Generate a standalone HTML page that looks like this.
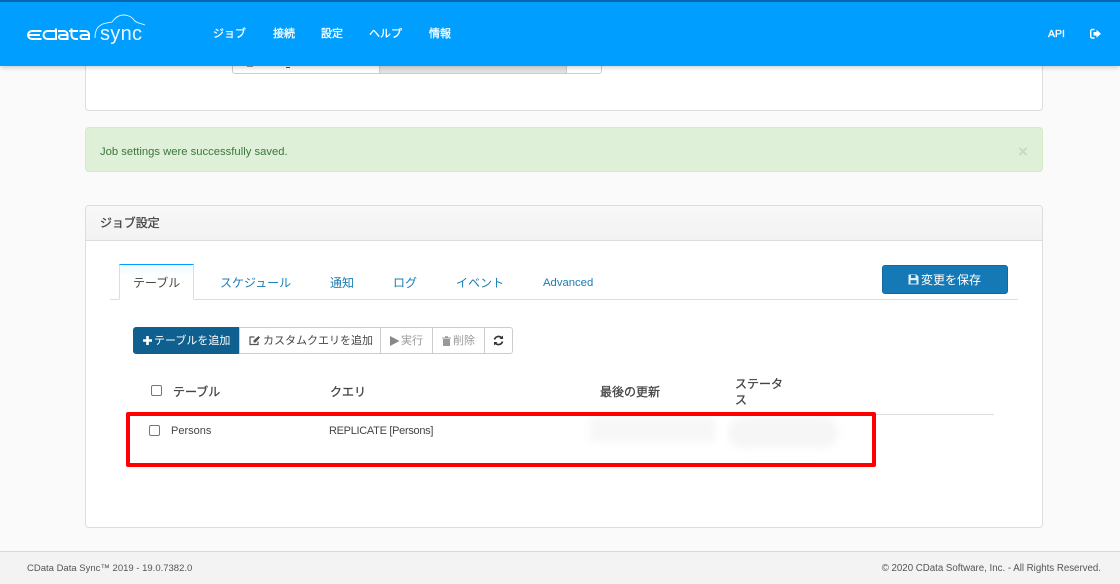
<!DOCTYPE html>
<html lang="ja"><head><meta charset="utf-8"><title>CData Sync</title>
<style>
html,body{margin:0;padding:0}
body{width:1120px;height:584px;position:relative;overflow:hidden;background:#fafafa;font-family:"Liberation Sans","Noto Sans CJK JP",sans-serif;font-size:12px;color:#444}
.a{position:absolute;white-space:nowrap}
.box{position:absolute;box-sizing:border-box}
.nav{position:absolute;top:26px;color:#fff;font-size:11px;line-height:16px;-webkit-text-stroke:.3px #fff;white-space:nowrap}
.tab{position:absolute;top:275px;line-height:16px;font-size:12px;color:#1a7db5;white-space:nowrap}
.btn{position:absolute;top:327px;height:27px;box-sizing:border-box;border:1px solid #ccc;background:#fff;font-size:11px;line-height:27px;white-space:nowrap;text-align:center;color:#444}
.cb{position:absolute;width:11px;height:11px;box-sizing:border-box;border:1px solid #767676;border-radius:2px;background:#fff}
.th{position:absolute;font-size:12px;-webkit-text-stroke:.3px #444;color:#444;line-height:16px;white-space:nowrap}
</style></head><body>

<!-- top panel fragment -->
<div class="box" style="left:85px;top:50px;width:958px;height:61px;background:#fff;border:1px solid #ddd;border-radius:4px"></div>
<div class="box" style="left:232px;top:50px;width:370px;height:24px;background:#fff;border:1px solid #ccc;border-radius:3px"></div>
<div class="box" style="left:379px;top:50px;width:188px;height:24px;background:#e2e2e2;border:1px solid #ccc;border-width:0 1px 1px 1px"></div>
<div class="box" style="left:247px;top:66px;width:6px;height:1px;background:#999"></div>
<div class="box" style="left:286px;top:67px;width:4px;height:1px;background:#555"></div>

<!-- header -->
<div class="box" style="left:0;top:0;width:1120px;height:66px;background:#009fff;border-top:2px solid #0a66b0;box-shadow:0 1px 5px rgba(0,0,0,.22)"></div>
<svg class="box" style="left:0;top:0" width="160" height="60" viewBox="0 0 160 60" fill="none" stroke="#fff">
 <path d="M41.500 31H32a4 4 0 0 0 0 8H41.500M29 35H40" stroke-width="2"/>
 <path d="M56 28.500V39H47.500a4 4 0 0 1 0-8H56" stroke-width="2"/>
 <path d="M58 31H64a3.500 3.500 0 0 1 3.500 3.500V39H61a2 2 0 0 1 0-4H67.500" stroke-width="2"/>
 <path d="M71.500 28.500V35a4 4 0 0 0 4 4H78M69 31H78" stroke-width="2"/>
 <path d="M79.500 31H85.500a3.500 3.500 0 0 1 3.500 3.500V39H82.500a2 2 0 0 1 0-4H89" stroke-width="2"/>
 <path d="M95 38C95 32 97 27 101 25C104 23 108 23 112 22C115 18 119 15 123 15C128 15 132 17 134 20C136 23 140 23 145 25" stroke-width=".9" opacity=".9"/>
 <text x="100" y="40" font-family="Liberation Sans,sans-serif" font-size="20" fill="#fff" stroke="none" opacity=".92" textLength="42">sync</text>
</svg>
<div class="nav" style="left:213px">ジョブ</div>
<div class="nav" style="left:273px">接続</div>
<div class="nav" style="left:321px">設定</div>
<div class="nav" style="left:369px">ヘルプ</div>
<div class="nav" style="left:429px">情報</div>
<div class="nav" style="left:1048px;font-size:10.500px">API</div>
<svg class="box" style="left:1090px;top:28px" width="12" height="12" viewBox="0 0 12 12"><path d="M4.500 1.500H2.200A1.500 1.500 0 0 0 .7 3v5.500A1.500 1.500 0 0 0 2.200 10h2.300" fill="none" stroke="#fff" stroke-width="1.400"/><path d="M3.500 4H6.500V1.800L11 5.800 6.500 9.700V7.500H3.500z" fill="#fff"/></svg>

<!-- alert -->
<div class="box" style="left:85px;top:127px;width:958px;height:45px;background:#dff0d8;border:1px solid #d6e9c6;border-radius:4px"></div>
<div class="a" style="left:100px;top:145px;font-size:11.250px;line-height:15px;color:#3c763d">Job settings were successfully saved.</div>
<div class="a" style="left:1018px;top:143px;font-size:17px;line-height:18px;font-weight:bold;color:#c9dac3">×</div>

<!-- main panel -->
<div class="box" style="left:85px;top:205px;width:958px;height:323px;background:#fff;border:1px solid #ddd;border-radius:4px"></div>
<div class="box" style="left:86px;top:206px;width:956px;height:35px;background:linear-gradient(#f8f8f8,#f2f2f2);border-bottom:1px solid #ddd;border-radius:3px 3px 0 0"></div>
<div class="a" style="left:100px;top:215px;font-size:12px;letter-spacing:-.1px;line-height:17px;color:#444;-webkit-text-stroke:.3px #444">ジョブ設定</div>

<!-- tabs -->
<div class="box" style="left:110px;top:299px;width:908px;height:1px;background:#ddd"></div>
<div class="box" style="left:119px;top:264px;width:75px;height:36px;background:linear-gradient(#eef9ff 0,#fff 12px);border:1px solid #ddd;border-top:1px solid #009fff;border-bottom:1px solid #fff"></div>
<div class="tab" style="left:133px;color:#444">テーブル</div>
<div class="tab" style="left:220px">スケジュール</div>
<div class="tab" style="left:330px">通知</div>
<div class="tab" style="left:393px">ログ</div>
<div class="tab" style="left:456px">イベント</div>
<div class="tab" style="left:543px;font-size:11.300px">Advanced</div>

<!-- save -->
<div class="box" style="left:882px;top:265px;width:126px;height:29px;background:#1479b5;border:1px solid #1169a0;border-radius:3px"></div>
<svg class="box" style="left:908px;top:274px" width="11" height="11" viewBox="0 0 11 11"><path d="M1 .5H8.500L10.500 2.500V10.500H.5V1z" fill="#dff0fa"/><rect x="3" y="1" width="4.500" height="3" fill="#1479b5"/><rect x="2.500" y="6.200" width="6" height="3.400" fill="#1479b5"/></svg>
<div class="a" style="left:921px;top:272px;font-size:12px;line-height:16px;color:#fff">変更を保存</div>

<!-- toolbar -->
<div class="btn" style="left:133px;width:107px;background:#0f5f8f;border-color:#0f5f8f;border-radius:3px 0 0 3px;color:#fff;text-align:left"><svg style="position:absolute;left:9px;top:8px" width="9" height="9" viewBox="0 0 9 9"><path d="M3.200 0H5.800V3.200H9V5.800H5.800V9H3.200V5.800H0V3.200H3.200z" fill="#fff"/></svg><span style="position:absolute;left:20px;top:0">テーブルを追加</span></div>
<div class="btn" style="left:239px;width:142px;text-align:left;padding-left:23px"><svg style="position:absolute;left:9px;top:7px" width="12" height="11" viewBox="0 0 12 11" fill="none" stroke="#555" stroke-width="1.200"><path d="M9 6.500V9.500H1V2H5.500"/><path d="M4.500 7.500V5.500L9.500 1 11 2.500 6.500 7.500z" fill="#555" stroke="none"/></svg>カスタムクエリを追加</div>
<div class="btn" style="left:380px;width:53px;color:#999;text-align:left;padding-left:20px"><svg style="position:absolute;left:9px;top:8px" width="10" height="10" viewBox="0 0 10 10"><path d="M0 0L9.500 5 0 10z" fill="#888"/></svg>実行</div>
<div class="btn" style="left:432px;width:53px;color:#999;text-align:left;padding-left:20px"><svg style="position:absolute;left:9px;top:8px" width="9" height="10" viewBox="0 0 9 10"><path d="M0 1.500H9V2.500H0zM3 .2H6V1.500H3zM1 3H8V10H1z" fill="#999"/></svg>削除</div>
<div class="btn" style="left:484px;width:29px;border-radius:0 3px 3px 0"><svg style="position:absolute;left:8px;top:7px" width="11" height="11" viewBox="0 0 11 11" fill="none" stroke="#333" stroke-width="1.700"><path d="M1.500 4.500A4.200 4.200 0 0 1 8.800 3"/><path d="M9.500 6.500A4.200 4.200 0 0 1 2.200 8"/><path d="M10 .5V4H6.500z" fill="#333" stroke="none"/><path d="M1 10.500V7H4.500z" fill="#333" stroke="none"/></svg></div>

<!-- table -->
<div class="cb" style="left:151px;top:385px"></div>
<div class="th" style="left:173px;top:384px">テーブル</div>
<div class="th" style="left:330px;top:384px">クエリ</div>
<div class="th" style="left:600px;top:384px">最後の更新</div>
<div class="th" style="left:735px;top:376px">ステータ<br>ス</div>
<div class="box" style="left:133px;top:414px;width:861px;height:1px;background:#ddd"></div>
<div class="cb" style="left:149px;top:425px"></div>
<div class="a" style="left:171px;top:424px;font-size:11px;line-height:15px">Persons</div>
<div class="a" style="left:329px;top:424px;font-size:11px;letter-spacing:-.3px;line-height:15px">REPLICATE [Persons]</div>

<!-- blurred -->
<div class="box" style="left:590px;top:418px;width:125px;height:24px;background:#f7f7f7;filter:blur(3px)"></div>
<div class="box" style="left:728px;top:418px;width:110px;height:30px;background:#f6f6f6;border-radius:14px;filter:blur(4px)"></div>

<!-- red highlight -->
<div class="box" style="left:126px;top:412px;width:750px;height:55px;border:4px solid #f00;border-radius:2px"></div>

<!-- footer -->
<div class="box" style="left:0;top:551px;width:1120px;height:33px;background:#f3f3f3;border-top:1px solid #d8d8d8"></div>
<div class="a" style="left:27px;top:562px;font-size:9.500px;line-height:14px;color:#555">CData Data Sync™ 2019 - 19.0.7382.0</div>
<div class="a" style="right:19px;top:562px;font-size:9.700px;line-height:14px;color:#555">© 2020 CData Software, Inc. - All Rights Reserved.</div>
</body></html>
